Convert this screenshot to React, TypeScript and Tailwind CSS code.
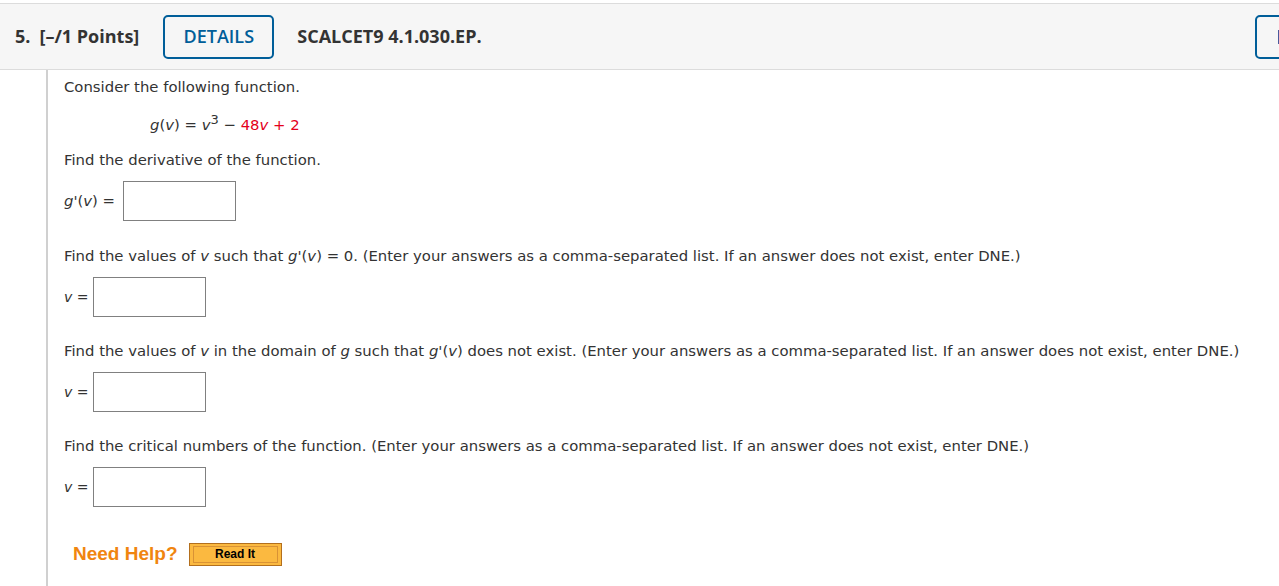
import React from 'react';

const body = { fontFamily: '"DejaVu Sans", Verdana, sans-serif' };
const head = { fontFamily: '"Open Sans", sans-serif' };

function Var({ children }: { children: React.ReactNode }) {
  return <i className="italic">{children}</i>;
}

function AnswerRow({ label }: { label: React.ReactNode }) {
  return (
    <div className="flex items-center gap-[5px]">
      <span className="text-[14px] text-[#333]">{label} =</span>
      <div className="w-[113px] h-[40px] border border-[#808080] bg-white" />
    </div>
  );
}

export default function App() {
  return (
    <div className="w-[1279px] h-[586px] overflow-hidden bg-white text-[#222]" style={body}>
      <div className="h-[3px]" />
      {/* Header */}
      <header
        className="h-[67px] bg-[#f6f6f6] border-y border-[#dcdcdc] flex items-center pl-[15px] overflow-hidden"
        style={head}
      >
        <span className="text-[18px] font-bold text-[#333] whitespace-nowrap">5.</span>
        <span className="ml-[9px] text-[18px] font-bold text-[#333] whitespace-nowrap">[–/1 Points]</span>
        <button className="ml-[24px] w-[111px] h-[44px] border-2 border-[#005e99] rounded-[5px] text-[18px] font-semibold text-[#005e99] bg-[#f6f6f6]">
          DETAILS
        </button>
        <span className="ml-[23px] text-[18px] font-bold text-[#333] whitespace-nowrap">SCALCET9 4.1.030.EP.</span>
        <div className="ml-auto mr-[-40px] w-[64px] h-[44px] border-2 border-[#005e99] rounded-[5px] flex items-center pl-[21px] shrink-0">
          <span className="w-[3px] h-[14px] bg-[#4a5a9c]" />
        </div>
      </header>

      {/* Body */}
      <div className="ml-[46px] border-l-2 border-[#d0d0d0] pl-[16px] h-[520px] text-[14.85px] text-[#333]">
        <p className="pt-[7px] leading-[20px]">Consider the following function.</p>
        <p className="mt-[18px] pl-[86px] leading-[20px]">
          <Var>g</Var>(<Var>v</Var>) = <Var>v</Var>
          <sup className="text-[13px] top-[-6px]">3</sup> − <span className="text-[#e4001b]">48<Var>v</Var> + 2</span>
        </p>
        <p className="mt-[15px] leading-[20px]">Find the derivative of the function.</p>
        <div className="mt-[11px] flex items-center gap-[8px]">
          <span>
            <Var>g</Var>'(<Var>v</Var>) =
          </span>
          <div className="w-[113px] h-[40px] border border-[#808080] bg-white" />
        </div>

        <p className="mt-[25px] leading-[20px]">
          Find the values of <Var>v</Var> such that <Var>g</Var>'(<Var>v</Var>) = 0. (Enter your answers as a comma-separated list. If an answer does not exist, enter DNE.)
        </p>
        <div className="mt-[11px]">
          <AnswerRow label={<Var>v</Var>} />
        </div>

        <p className="mt-[24px] leading-[20px]">
          Find the values of <Var>v</Var> in the domain of <Var>g</Var> such that <Var>g</Var>'(<Var>v</Var>) does not exist. (Enter your answers as a comma-separated list. If an answer does not exist, enter DNE.)
        </p>
        <div className="mt-[11px]">
          <AnswerRow label={<Var>v</Var>} />
        </div>

        <p className="mt-[24px] leading-[20px]">
          Find the critical numbers of the function. (Enter your answers as a comma-separated list. If an answer does not exist, enter DNE.)
        </p>
        <div className="mt-[11px]">
          <AnswerRow label={<Var>v</Var>} />
        </div>

        <div className="mt-[33px] ml-[9px] flex items-center gap-[11px]">
          <span
            className="text-[19px] font-bold text-[#f0850f]"
            style={{ fontFamily: '"Liberation Sans", Arial, sans-serif' }}
          >
            Need Help?
          </span>
          <button
            className="w-[93px] h-[23px] border border-[#b36f1d] bg-[#fbb940] flex items-center justify-center"
            style={{ fontFamily: '"Liberation Sans", Arial, sans-serif' }}
          >
            <span className="w-[85px] h-[17px] border border-[#d99235] bg-[#fbb940] text-[12px] font-bold text-black leading-[15px]">
              Read It
            </span>
          </button>
        </div>
      </div>
    </div>
  );
}
